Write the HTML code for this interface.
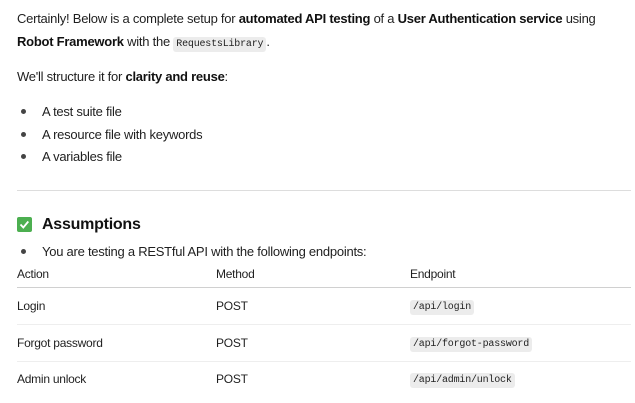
<!DOCTYPE html>
<html><head><meta charset="utf-8"><style>
body{margin:0;width:635px;height:403px;background:#fff;font-family:"Liberation Sans",sans-serif;color:#1f1f1f;position:relative;overflow:hidden}
.t{position:absolute;white-space:nowrap;font-size:13px;letter-spacing:-0.25px}
b{font-weight:bold;color:#111}
code{font-family:"Liberation Mono",monospace;font-size:10px;background:#ececec;border-radius:3px;padding:2px 3px;letter-spacing:-0.2px}
.dot{position:absolute;width:5px;height:5px;border-radius:50%;background:#444}
.hr{position:absolute;left:17px;width:614px;height:1px;background:#ddd}
.s{font-size:12px}
</style></head><body>
<div class="t" style="left:17px;top:11px">Certainly! Below is a complete setup for <b>automated API testing</b> of a <b>User Authentication service</b> using</div>
<div class="t" style="left:17px;top:34px"><b>Robot Framework</b> with the <code>RequestsLibrary</code>.</div>
<div class="t" style="left:17px;top:69px">We'll structure it for <b>clarity and reuse</b>:</div>
<div class="dot" style="left:21px;top:109px"></div><div class="t" style="left:42px;top:104px">A test suite file</div>
<div class="dot" style="left:21px;top:132px"></div><div class="t" style="left:42px;top:127px">A resource file with keywords</div>
<div class="dot" style="left:21px;top:154px"></div><div class="t" style="left:42px;top:149px">A variables file</div>
<div class="hr" style="top:190px"></div>
<div style="position:absolute;left:17px;top:217px;width:15px;height:15px;background:#4caf50;border-radius:2px"><svg width="15" height="15"><path d="M3.5 7.5l2.8 3 5-6" stroke="#fff" stroke-width="1.8" fill="none"/></svg></div>
<div class="t" style="left:42px;top:216px;font-size:16px;font-weight:bold;color:#111">Assumptions</div>
<div class="dot" style="left:21px;top:249px"></div><div class="t" style="left:42px;top:244px">You are testing a RESTful API with the following endpoints:</div>
<div class="t s" style="left:17px;top:267px">Action</div>
<div class="t s" style="left:216px;top:267px">Method</div>
<div class="t s" style="left:410px;top:267px">Endpoint</div>
<div class="hr" style="top:287px;background:#d0d0d0"></div>
<div class="t s" style="left:17px;top:299px">Login</div><div class="t s" style="left:216px;top:299px">POST</div><div class="t s" style="left:410px;top:298px"><code>/api/login</code></div>
<div class="hr" style="top:324px;background:#eee"></div>
<div class="t s" style="left:17px;top:336px">Forgot password</div><div class="t s" style="left:216px;top:336px">POST</div><div class="t s" style="left:410px;top:335px"><code>/api/forgot-password</code></div>
<div class="hr" style="top:361px;background:#eee"></div>
<div class="t s" style="left:17px;top:372px">Admin unlock</div><div class="t s" style="left:216px;top:372px">POST</div><div class="t s" style="left:410px;top:371px"><code>/api/admin/unlock</code></div>
</body></html>
